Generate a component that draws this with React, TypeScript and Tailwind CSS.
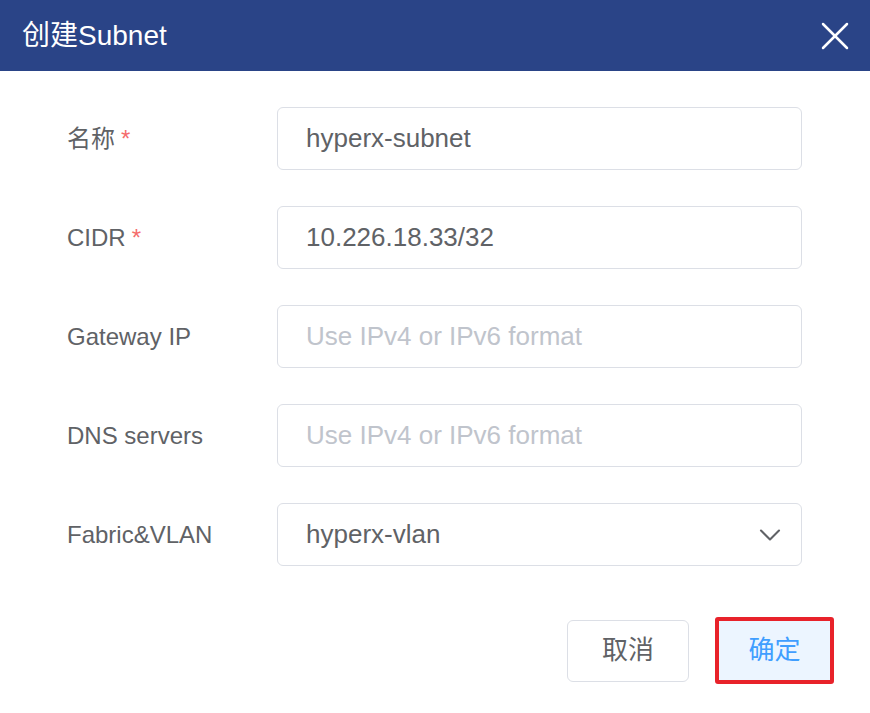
import { ChevronDown, X } from "lucide-react";

const font = { fontFamily: '"Liberation Sans", "Noto Sans CJK SC", sans-serif' };

function Row({ label, required, children }: { label: string; required?: boolean; children: React.ReactNode }) {
  return (
    <div className="flex items-center h-[63px]">
      <div className="w-[277px] pl-[67px] text-[24px] text-[#606266]">
        {label}
        {required && <span className="text-[#f56c6c] ml-[6px]">*</span>}
      </div>
      {children}
    </div>
  );
}

function Field({ value, placeholder }: { value?: string; placeholder?: string }) {
  return (
    <div className="w-[525px] h-[63px] border border-[#dcdfe6] rounded-[6px] flex items-center pl-[28px] text-[26px]">
      {value ? (
        <span className="text-[#606266]">{value}</span>
      ) : (
        <span className="text-[#c0c4cc]">{placeholder}</span>
      )}
    </div>
  );
}

export default function App() {
  return (
    <div className="w-[870px] h-[713px] bg-white" style={font}>
      <div className="h-[71px] bg-[#2a4487] flex items-center justify-between pl-[22px] pr-[11px]">
        <span className="text-white text-[28px]">创建Subnet</span>
        <X className="text-white" size={48} strokeWidth={1.25} />
      </div>

      <div className="pt-[36px] flex flex-col gap-[36px]">
        <Row label="名称" required>
          <Field value="hyperx-subnet" />
        </Row>
        <Row label="CIDR" required>
          <Field value="10.226.18.33/32" />
        </Row>
        <Row label="Gateway IP">
          <Field placeholder="Use IPv4 or IPv6 format" />
        </Row>
        <Row label="DNS servers">
          <Field placeholder="Use IPv4 or IPv6 format" />
        </Row>
        <Row label="Fabric&VLAN">
          <div className="w-[525px] h-[63px] border border-[#dcdfe6] rounded-[6px] flex items-center justify-between pl-[28px] pr-[13px] text-[26px]">
            <span className="text-[#606266]">hyperx-vlan</span>
            <ChevronDown className="text-[#606266]" size={36} strokeWidth={1.4} />
          </div>
        </Row>
      </div>

      <div className="flex justify-end items-center gap-[26px] pr-[36px] mt-[51px]">
        <button className="w-[122px] h-[62px] border border-[#dcdfe6] rounded-[6px] text-[26px] text-[#606266] bg-white">
          取消
        </button>
        <div className="border-[4px] border-[#e8222a] rounded-[3px] w-[119px] h-[67px] bg-[#ecf5ff] flex items-center justify-center">
          <span className="text-[26px] text-[#409eff]">确定</span>
        </div>
      </div>
    </div>
  );
}
